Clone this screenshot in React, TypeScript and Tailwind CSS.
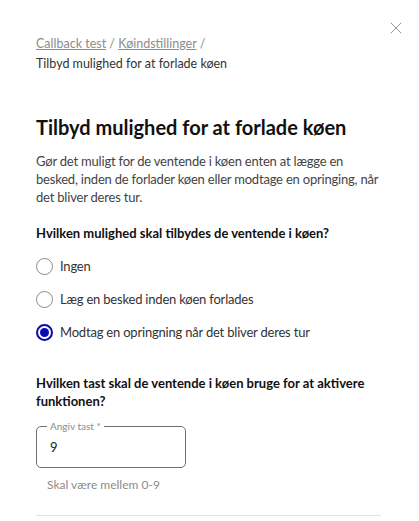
import { X } from 'lucide-react'

type RadioProps = {
  label: string
  checked?: boolean
}

const Radio = ({ label, checked = false }: RadioProps) => {
  return (
    <label className="flex items-center gap-[7px] h-[33px]">
      {checked ? (
        <span className="flex h-[17px] w-[17px] items-center justify-center rounded-full border-2 border-[#0a0ab4]">
          <span className="h-[9px] w-[9px] rounded-full bg-[#0a0ab4]" />
        </span>
      ) : (
        <span className="h-[17px] w-[17px] rounded-full border-[1.5px] border-[#8a8a8a]" />
      )}
      <span className="text-[13px] tracking-[-0.2px] text-[#333]">{label}</span>
    </label>
  )
}

export default function App() {
  return (
    <div className="relative h-[521px] w-[419px] overflow-hidden bg-white font-['Lato',sans-serif] text-[#222]">
      <button className="absolute right-[13px] top-[18px] text-[#8c8c8c]">
        <X size={20} strokeWidth={1.1} />
      </button>

      <div className="px-[36px] pt-[34px]">
        <nav className="text-[12.5px] leading-[20px]">
          <a className="text-[#8c8c8c] underline">Callback test</a>
          <span className="text-[#8c8c8c]"> / </span>
          <a className="text-[#8c8c8c] underline">Køindstillinger</a>
          <span className="text-[#8c8c8c]"> /</span>
          <div className="text-[#333]">Tilbyd mulighed for at forlade køen</div>
        </nav>

        <h1 className="mt-[40px] text-[20px] font-bold leading-[26px] text-[#111]">
          Tilbyd mulighed for at forlade køen
        </h1>

        <p className="mt-[12px] text-[13px] leading-[18px] tracking-[-0.2px] text-[#444]">
          Gør det muligt for de ventende i køen enten at lægge en besked, inden de forlader køen eller modtage en opringing, når det bliver deres tur.
        </p>

        <h2 className="mt-[18px] text-[13px] font-bold leading-[18px] text-[#111]">
          Hvilken mulighed skal tilbydes de ventende i køen?
        </h2>

        <div className="mt-[8px] flex flex-col">
          <Radio label="Ingen" />
          <Radio label="Læg en besked inden køen forlades" />
          <Radio label="Modtag en opringning når det bliver deres tur" checked />
        </div>

        <h2 className="mt-[25px] text-[13px] font-bold leading-[18px] text-[#111]">
          Hvilken tast skal de ventende i køen bruge for at aktivere funktionen?
        </h2>

        <fieldset className="mt-[11px] h-[47px] w-[150px] rounded-[5px] border border-[#6f6f6f] px-[10px]">
          <legend className="px-[3px] text-[10px] leading-[10px] text-[#8c8c8c]">Angiv tast *</legend>
          <div className="pl-[3px] pt-[7px] text-[13px] text-[#222]">9</div>
        </fieldset>

        <div className="mt-[8px] pl-[11px] text-[12px] text-[#8c8c8c]">Skal være mellem 0-9</div>

        <div className="mt-[21px] h-px w-[345px] bg-[#e2e2e2]" />
      </div>
    </div>
  )
}
